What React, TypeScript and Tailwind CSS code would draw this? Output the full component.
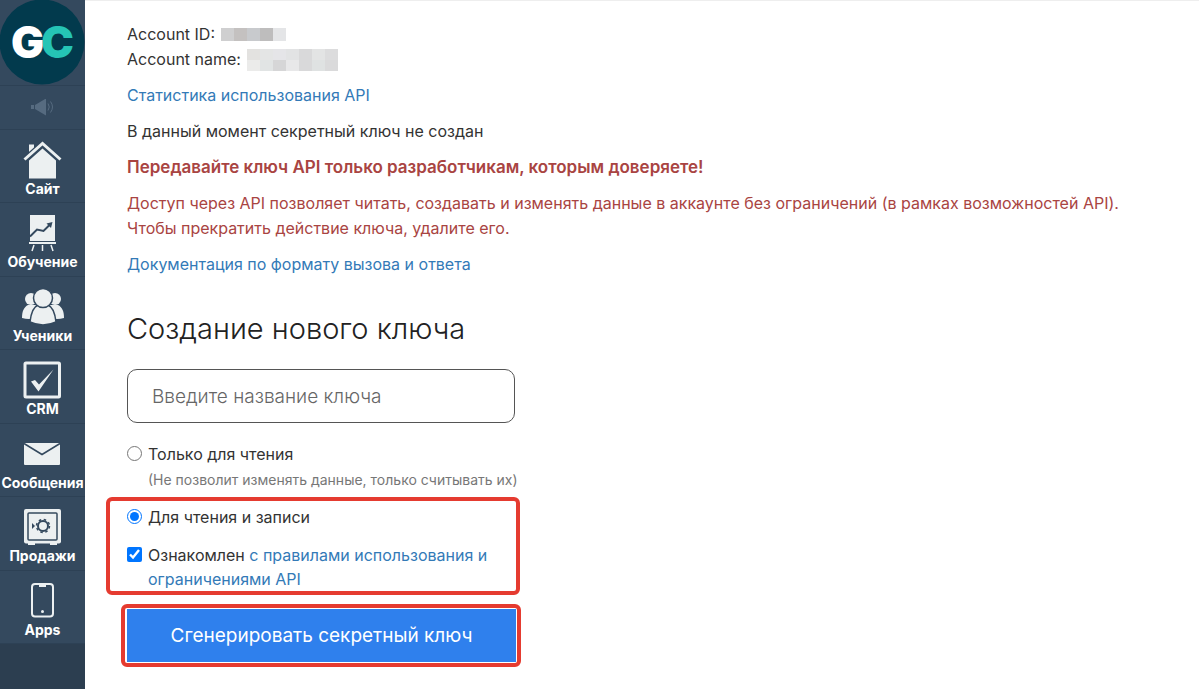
import { useState, type ReactNode } from 'react';

interface MenuItem {
  label: string;
  icon: ReactNode;
}

const MENU: MenuItem[] = [
  {
    label: 'Сайт',
    icon: (
      <svg viewBox="1 0 40 40" className="size-10" fill="#ecf0f1">
        <path d="M7 4.500h5v4.500l-5 4.500z" />
        <path d="M7 20.500 20.500 8.500 34 20.500V38.500H7z" />
        <path d="M2 20 20.500 3.500 39 20" fill="none" stroke="#34495e" strokeWidth="5.500" />
        <path d="M2.500 19.500 20.500 3.500 38.500 19.500" fill="none" stroke="#ecf0f1" strokeWidth="3" />
      </svg>
    ),
  },
  {
    label: 'Обучение',
    icon: (
      <svg viewBox="1 0 40 40" className="size-10" fill="#ecf0f1">
        <path d="M8 2h25v26H8z" />
        <path d="M7 29h27v2H7z" />
        <path d="M12 32 10 38M20.500 32v6M29 32l2 6" stroke="#ecf0f1" strokeWidth="1.500" />
        <path d="m8 23.500 7-7 6.500 1.500 6-6" fill="none" stroke="#34495e" strokeWidth="2" />
        <path d="m24.500 10.500 6-1.500-1.500 6z" fill="#34495e" />
      </svg>
    ),
  },
  {
    label: 'Ученики',
    icon: (
      <svg viewBox="0 0 44 40" className="h-10 w-11" fill="#ecf0f1">
        <circle cx="10" cy="12" r="6" />
        <circle cx="34" cy="12" r="6" />
        <path d="M1 31c0-7 2-11 6-13h8v13q-7 2-14 0zM43 31c0-7-2-11-6-13h-8v13q7 2 14 0z" />
        <g stroke="#34495e" strokeWidth="1.500">
          <path d="M9 35c1-9 3-15 8-17h10c5 2 7 8 8 17q-13 6-26 0z" />
          <circle cx="22" cy="11" r="9.500" />
        </g>
      </svg>
    ),
  },
  {
    label: 'CRM',
    icon: (
      <svg viewBox="1 0 40 40" className="size-10">
        <rect x="3" y="3" width="34.500" height="34" rx="1" fill="none" stroke="#ecf0f1" strokeWidth="3" />
        <path d="m9 21.500 4-1.500 4 4.500 14.500-15-15 22z" fill="#ecf0f1" />
      </svg>
    ),
  },
  {
    label: 'Сообщения',
    icon: (
      <svg viewBox="1 1 40 40" className="size-10">
        <rect x="2" y="10" width="36" height="22" rx="1" fill="#ecf0f1" />
        <path d="M2 10.500 20 21.500 38 10.500" fill="none" stroke="#34495e" strokeWidth="1.500" />
      </svg>
    ),
  },
  {
    label: 'Продажи',
    icon: (
      <svg viewBox="1 0 40 40" className="size-10">
        <path d="M6 35h7v3H6zM28 35h7v3h-7z" fill="#ecf0f1" />
        <rect x="2" y="2" width="37" height="34.500" rx="2" fill="#ecf0f1" />
        <rect x="6" y="6" width="29" height="27" rx="1" fill="none" stroke="#34495e" strokeWidth="1.500" />
        <circle cx="21" cy="19" r="5" fill="none" stroke="#34495e" strokeWidth="2" />
        <circle cx="21" cy="19" r="6.500" fill="none" stroke="#34495e" strokeWidth="1.500" strokeDasharray="2.500 2.600" />
        <path d="m10 16 3 3-3 3z" fill="#34495e" />
      </svg>
    ),
  },
  {
    label: 'Apps',
    icon: (
      <svg viewBox="1 0 40 40" className="size-10">
        <rect x="10" y="3" width="21" height="32.500" rx="3" fill="none" stroke="#ecf0f1" strokeWidth="2" />
        <path d="M17 3h7v3h-7z" fill="#ecf0f1" />
        <circle cx="20.500" cy="30.500" r="1.500" fill="#ecf0f1" />
      </svg>
    ),
  },
];

// blurred-out account values, one colour per cell
const ID_CELLS = ['bg-[#cfcfd0]', 'bg-[#c4c1c0]', 'bg-[#c8cacd]', 'bg-[#bebdbd]', 'bg-[#e4e5e7]'];
const NAME_CELLS = [
  'bg-[#e3e2e0]', 'bg-[#e4e5e5]', 'bg-[#e5e5e8]', 'bg-[#e2e3e4]', 'bg-[#d9d9da]', 'bg-[#e3e4e4]', 'bg-[#dcdcdd]',
  'bg-[#ebebea]', 'bg-[#e1e4e4]', 'bg-[#d6d6d7]', 'bg-[#e8e8e9]', 'bg-[#d9d9da]', 'bg-[#dfe2e2]', 'bg-[#dadadb]',
];

function Logo() {
  return (
    <svg viewBox="0 0 85 85" className="size-[85px]" role="img" aria-label="GetCourse">
      <circle cx="42" cy="42" r="42.500" fill="#023a4d" />
      <g fontFamily="Inter, sans-serif" fontWeight="900" fontSize="44">
        <text x="11" y="58" fill="#ffffff">G</text>
        <text x="41" y="58" fill="#25c4b5">C</text>
      </g>
    </svg>
  );
}

function Sidebar() {
  return (
    <aside className="w-[85px] shrink-0 bg-[#2c3e50] font-[Inter,sans-serif]">
      <a href="#" className="block bg-[#34495e]">
        <Logo />
      </a>
      <button
        type="button"
        aria-label="Уведомления"
        className="flex h-[45px] w-full items-center justify-center border-y border-[#2d4155] bg-[#34495e]"
      >
        <svg viewBox="1 1 24 18" className="h-[18px] w-6" fill="#566b80">
          <path d="M0 7h4v4H0zM5 7l11-6.500v17L5 11z" />
          <path d="M18 5.500q2.500 3.500 0 7M20.500 3.500q4 5.500 0 11" fill="none" stroke="#566b80" />
        </svg>
      </button>
      <nav className="grid h-[514px] grid-rows-7">
        {MENU.map((item) => (
          <a
            key={item.label}
            href="#"
            className="flex flex-col items-center border-b border-[#2d4155] bg-[#34495e] pt-[10px] text-sm leading-[18px] font-bold text-white"
          >
            {item.icon}
            {item.label}
          </a>
        ))}
      </nav>
    </aside>
  );
}

export default function App() {
  const [name, setName] = useState('');
  const [access, setAccess] = useState<'read' | 'write'>('write');
  const [agreed, setAgreed] = useState(true);

  return (
    <div className="flex min-h-screen bg-white">
      <Sidebar />
      <main className="min-w-0 flex-1 border-t border-[#eeeeee] pt-[21px] pr-8 pl-[42px] font-[Inter,sans-serif] text-base leading-[25px] text-[#333333]">
        <div className="flex flex-col gap-[11px]">
          <div>
            <div className="flex items-center gap-[6px]">
              Account ID:
              <span className="grid h-[13px] w-[65px] grid-cols-5">
                {ID_CELLS.map((c, i) => (
                  <span key={i} className={c} />
                ))}
              </span>
            </div>
            <div className="flex items-center gap-[6px]">
              Account name:
              <span className="grid h-[22px] w-[91px] grid-cols-7">
                {NAME_CELLS.map((c, i) => (
                  <span key={i} className={c} />
                ))}
              </span>
            </div>
          </div>
          <p>
            <a href="#" className="text-[#337ab7]">Статистика использования API</a>
          </p>
          <p>В данный момент секретный ключ не создан</p>
          <p className="text-[17px] font-semibold text-[#a94442]">
            Передавайте ключ API только разработчикам, которым доверяете!
          </p>
          <p className="text-[#a94442]">
            Доступ через API позволяет читать, создавать и изменять данные в аккаунте без ограничений (в рамках возможностей API).
            <br />
            Чтобы прекратить действие ключа, удалите его.
          </p>
          <p>
            <a href="#" className="text-[#337ab7]">Документация по формату вызова и ответа</a>
          </p>
        </div>

        <h2 className="mt-8 mb-5 text-[29px] leading-10 font-light text-[#222222]">Создание нового ключа</h2>

        <form className="w-[388px]" onSubmit={(e) => e.preventDefault()}>
          <input
            type="text"
            aria-label="Название ключа"
            placeholder="Введите название ключа"
            value={name}
            onChange={(e) => setName(e.target.value)}
            className="h-[54px] w-full rounded-[10px] border border-[#555555] px-6 text-[19px] font-light placeholder:text-[#666666]"
          />

          <label className="mt-[19px] flex items-start gap-[6px]">
            <input
              type="radio"
              name="access"
              checked={access === 'read'}
              onChange={() => setAccess('read')}
              className="mt-1 size-[15px] shrink-0"
            />
            <span>
              Только для чтения
              <small className="block text-sm leading-[25px] whitespace-nowrap text-[#777777]">
                (Не позволит изменять данные, только считывать их)
              </small>
            </span>
          </label>

          <div className="mt-[5px] -mr-[5px] -ml-[21px] flex flex-col gap-[13px] rounded-md border-4 border-[#e53b30] pt-1 pl-[17px]">
            <label className="flex items-start gap-[6px]">
              <input
                type="radio"
                name="access"
                checked={access === 'write'}
                onChange={() => setAccess('write')}
                className="mt-1 size-[15px] shrink-0"
              />
              Для чтения и записи
            </label>
            <div className="flex items-start gap-[6px]">
              <input
                id="rules"
                type="checkbox"
                checked={agreed}
                onChange={(e) => setAgreed(e.target.checked)}
                className="mt-1 size-[15px] shrink-0"
              />
              <label htmlFor="rules" className="leading-6">
                Ознакомлен{' '}
                <a href="#" className="text-[#337ab7]">
                  с правилами использования и<br />
                  ограничениями API
                </a>
              </label>
            </div>
          </div>

          <div className="mt-[9px] -mr-[6px] -ml-[6px] rounded-md border-4 border-[#e53b30] py-px pr-px pl-0.5">
            <button type="submit" className="h-[53px] w-full bg-[#2f80ed] text-[19px] text-white">
              Сгенерировать секретный ключ
            </button>
          </div>
        </form>
      </main>
    </div>
  );
}
